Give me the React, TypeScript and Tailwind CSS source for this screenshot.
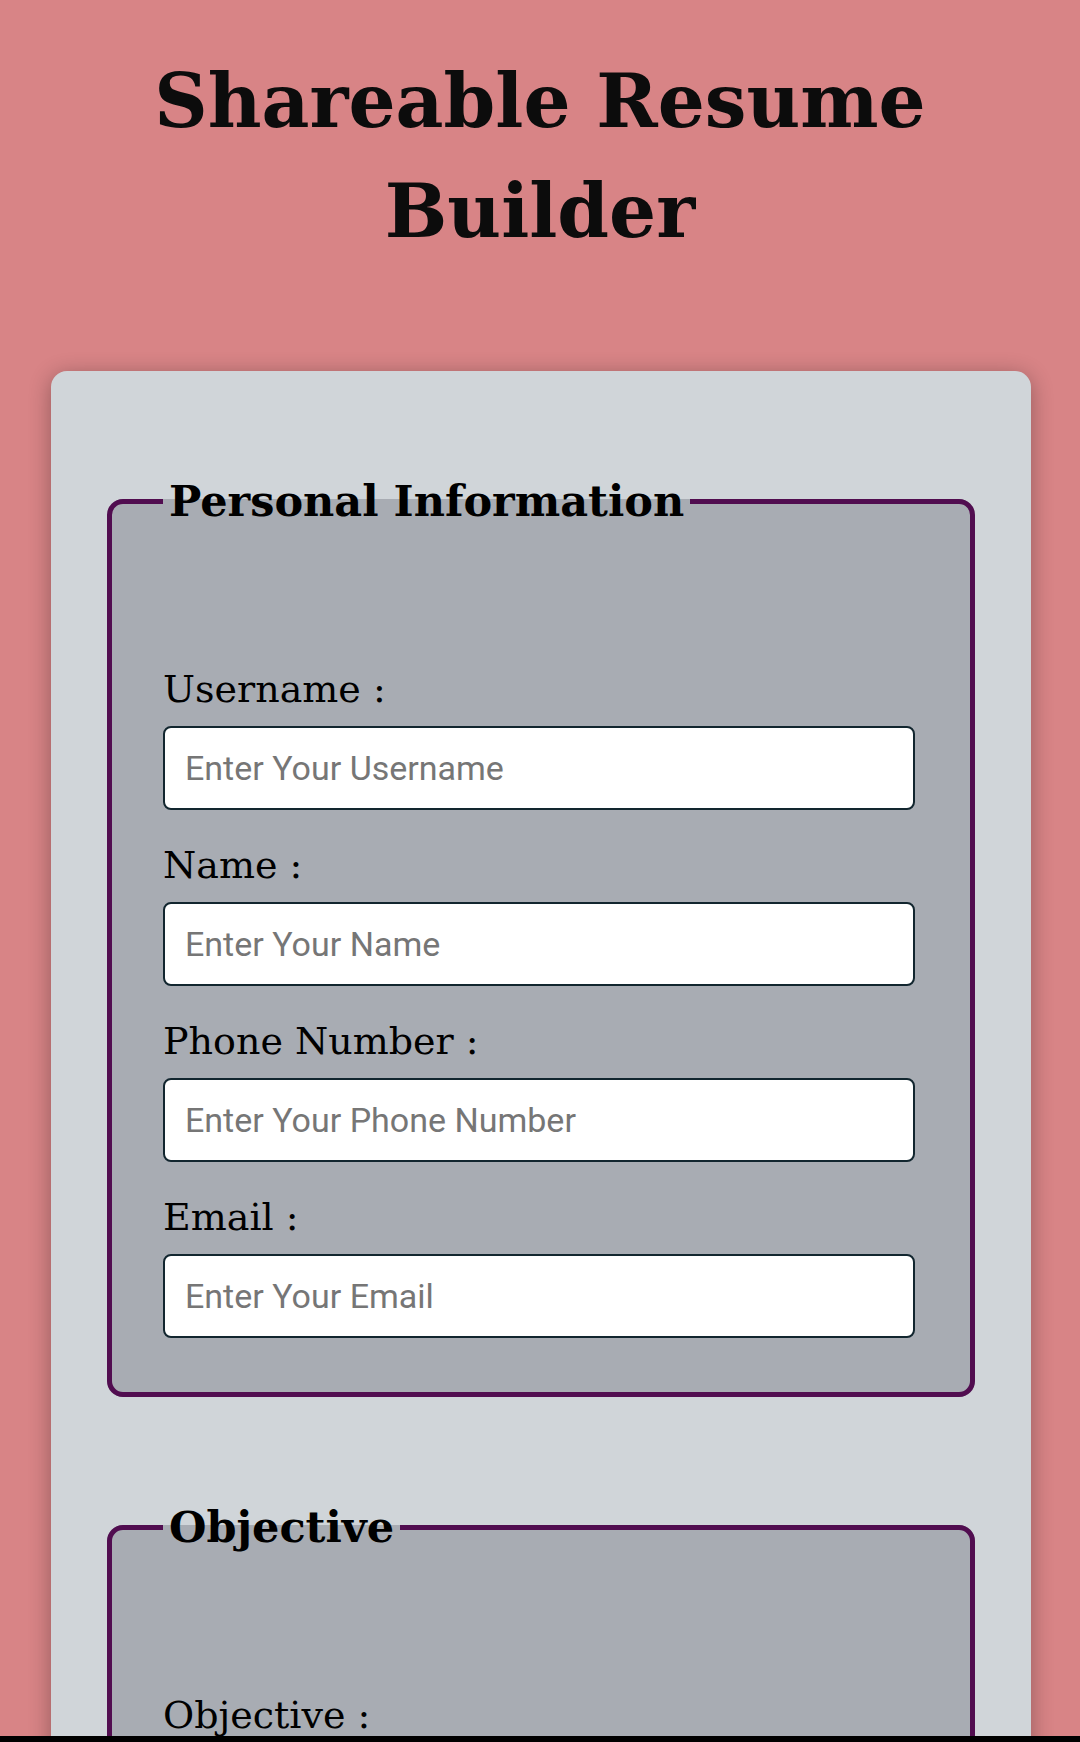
import { useState } from 'react';

const serif = { fontFamily: '"DejaVu Serif", "Liberation Serif", serif' };

const Field = ({ label, placeholder, type = 'text' }: { label: string; placeholder: string; type?: string }) => {
  const [value, setValue] = useState('');
  return (
    <div className="flex flex-col">
      <label className="text-[38px] leading-[44px] text-black mb-[15px]" style={serif}>
        {label}
      </label>
      <input
        type={type}
        value={value}
        onChange={(e) => setValue(e.target.value)}
        placeholder={placeholder}
        className="w-full h-[84px] bg-white border-2 border-[#12262f] rounded-lg px-[20px] text-[34px] text-black placeholder:text-[#767676] outline-none font-['Roboto',sans-serif]"
      />
    </div>
  );
};

const Section = ({ title, children }: { title: string; children: React.ReactNode }) => (
  <fieldset className="bg-[#a8acb3] border-[5px] border-[#510d50] rounded-2xl pl-[51px] pr-[55px] pt-[140px] pb-[54px]">
    <legend className="px-[6px] text-[43px] leading-[51px] font-bold text-black" style={serif}>
      {title}
    </legend>
    <div className="flex flex-col gap-[33px]">{children}</div>
  </fieldset>
);

export default function App() {
  return (
    <div className="h-[1742px] flex flex-col bg-[#d88486]">
      <div className="flex-1 overflow-hidden">
        <h1
          className="mt-[46px] mx-auto max-w-[900px] text-center text-[74px] leading-[110px] font-bold text-[#0c0c0c]"
          style={serif}
        >
          Shareable Resume Builder
        </h1>

        <form
          onSubmit={(e) => e.preventDefault()}
          className="mt-[105px] ml-[51px] w-[980px] bg-[#d0d5d9] rounded-2xl shadow-[0_4px_22px_rgba(0,0,0,0.32)] px-[56px] pt-[105px] pb-[105px] flex flex-col gap-[105px]"
        >
          <Section title="Personal Information">
            <Field label="Username :" placeholder="Enter Your Username" />
            <Field label="Name :" placeholder="Enter Your Name" />
            <Field label="Phone Number :" placeholder="Enter Your Phone Number" type="tel" />
            <Field label="Email :" placeholder="Enter Your Email" type="email" />
          </Section>

          <Section title="Objective">
            <div className="flex flex-col">
              <label className="text-[38px] leading-[44px] text-black mb-[15px]" style={serif}>
                Objective :
              </label>
              <textarea
                placeholder="Write Your Objective"
                className="w-full h-[160px] bg-white border-2 border-[#12262f] rounded-lg px-[20px] py-[16px] text-[34px] placeholder:text-[#767676] outline-none font-['Roboto',sans-serif]"
              />
            </div>
          </Section>
        </form>
      </div>
      <div className="h-[6px] bg-black"></div>
    </div>
  );
}
